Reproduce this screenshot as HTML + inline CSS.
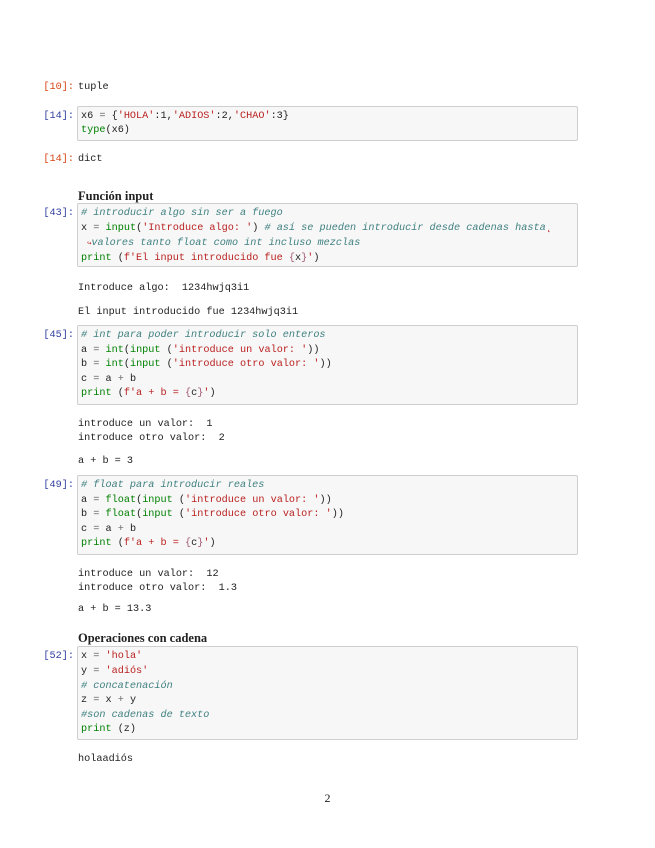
<!DOCTYPE html>
<html><head><meta charset="utf-8"><style>
body{margin:0;width:655px;height:848px;background:#fff;position:relative;overflow:hidden;font-family:"Liberation Mono","DejaVu Sans Mono",monospace;font-size:10.2px;color:#222}
.l{position:absolute;left:81px;height:14px;line-height:14px;white-space:pre;transform:translateY(3px)}
.o{left:78px}
.p{position:absolute;left:0;width:74px;text-align:right;height:14px;line-height:14px;white-space:pre;transform:translateY(3px)}
.pi{color:#303F9F}.po{color:#D84315}
.box{position:absolute;left:77px;width:499px;background:#f7f7f7;border:1px solid #cfcfcf;border-radius:2px}
.k{color:#008000}.s{color:#BA2121}.c{color:#408080;font-style:italic}.op{color:#666}
.h{position:absolute;left:78px;font-family:"Liberation Serif",serif;font-weight:bold;font-size:12.5px;line-height:14px;transform:translateY(1px)}
.pg{position:absolute;left:0;width:655px;text-align:center;top:791px;font-family:"Liberation Serif",serif;font-size:12px}
</style></head><body>
<div class="p po" style="top:78px">[10]:</div><div class="l o" style="top:78px">tuple</div>

<div class="box" style="top:106px;height:33px"></div>
<div class="p pi" style="top:107px">[14]:</div>
<div class="l" style="top:107px">x6 <span class="op">=</span> {<span class="s">'HOLA'</span>:1,<span class="s">'ADIOS'</span>:2,<span class="s">'CHAO'</span>:3}</div>
<div class="l" style="top:121px"><span class="k">type</span>(x6)</div>
<div class="p po" style="top:150px">[14]:</div><div class="l o" style="top:150px">dict</div>

<div class="h" style="top:188px">Función input</div>
<div class="box" style="top:203px;height:62px"></div>
<div class="p pi" style="top:204px">[43]:</div>
<div class="l c" style="top:204px"># introducir algo sin ser a fuego</div>
<div class="l" style="top:219px">x <span class="op">=</span> <span class="k">input</span>(<span class="s">'Introduce algo: '</span>) <span class="c"># así se pueden introducir desde cadenas hasta</span><span class="s">˛</span></div>
<div class="l c" style="top:234px"> <span class="s" style="font-size:7px">↪</span>valores tanto float como int incluso mezclas</div>
<div class="l" style="top:249px"><span class="k">print</span> (<span class="s">f'El input introducido fue </span><span class="s" style="color:#A45A77">{</span>x<span class="s" style="color:#A45A77">}</span><span class="s">'</span>)</div>

<div class="l o" style="top:279px">Introduce algo:  1234hwjq3i1</div>
<div class="l o" style="top:303px">El input introducido fue 1234hwjq3i1</div>

<div class="box" style="top:325px;height:78px"></div>
<div class="p pi" style="top:326px">[45]:</div>
<div class="l c" style="top:326px"># int para poder introducir solo enteros</div>
<div class="l" style="top:341px">a <span class="op">=</span> <span class="k">int</span>(<span class="k">input</span> (<span class="s">'introduce un valor: '</span>))</div>
<div class="l" style="top:355px">b <span class="op">=</span> <span class="k">int</span>(<span class="k">input</span> (<span class="s">'introduce otro valor: '</span>))</div>
<div class="l" style="top:370px">c <span class="op">=</span> a <span class="op">+</span> b</div>
<div class="l" style="top:384px"><span class="k">print</span> (<span class="s">f'a + b = </span><span class="s" style="color:#A45A77">{</span>c<span class="s" style="color:#A45A77">}</span><span class="s">'</span>)</div>

<div class="l o" style="top:415px">introduce un valor:  1</div>
<div class="l o" style="top:429px">introduce otro valor:  2</div>
<div class="l o" style="top:452px">a + b = 3</div>

<div class="box" style="top:475px;height:78px"></div>
<div class="p pi" style="top:476px">[49]:</div>
<div class="l c" style="top:476px"># float para introducir reales</div>
<div class="l" style="top:491px">a <span class="op">=</span> <span class="k">float</span>(<span class="k">input</span> (<span class="s">'introduce un valor: '</span>))</div>
<div class="l" style="top:505px">b <span class="op">=</span> <span class="k">float</span>(<span class="k">input</span> (<span class="s">'introduce otro valor: '</span>))</div>
<div class="l" style="top:520px">c <span class="op">=</span> a <span class="op">+</span> b</div>
<div class="l" style="top:534px"><span class="k">print</span> (<span class="s">f'a + b = </span><span class="s" style="color:#A45A77">{</span>c<span class="s" style="color:#A45A77">}</span><span class="s">'</span>)</div>

<div class="l o" style="top:565px">introduce un valor:  12</div>
<div class="l o" style="top:579px">introduce otro valor:  1.3</div>
<div class="l o" style="top:600px">a + b = 13.3</div>

<div class="h" style="top:630px">Operaciones con cadena</div>
<div class="box" style="top:646px;height:92px"></div>
<div class="p pi" style="top:647px">[52]:</div>
<div class="l" style="top:647px">x <span class="op">=</span> <span class="s">'hola'</span></div>
<div class="l" style="top:662px">y <span class="op">=</span> <span class="s">'adiós'</span></div>
<div class="l c" style="top:677px"># concatenación</div>
<div class="l" style="top:691px">z <span class="op">=</span> x <span class="op">+</span> y</div>
<div class="l c" style="top:706px">#son cadenas de texto</div>
<div class="l" style="top:720px"><span class="k">print</span> (z)</div>

<div class="l o" style="top:750px">holaadiós</div>
<div class="pg">2</div>
</body></html>
